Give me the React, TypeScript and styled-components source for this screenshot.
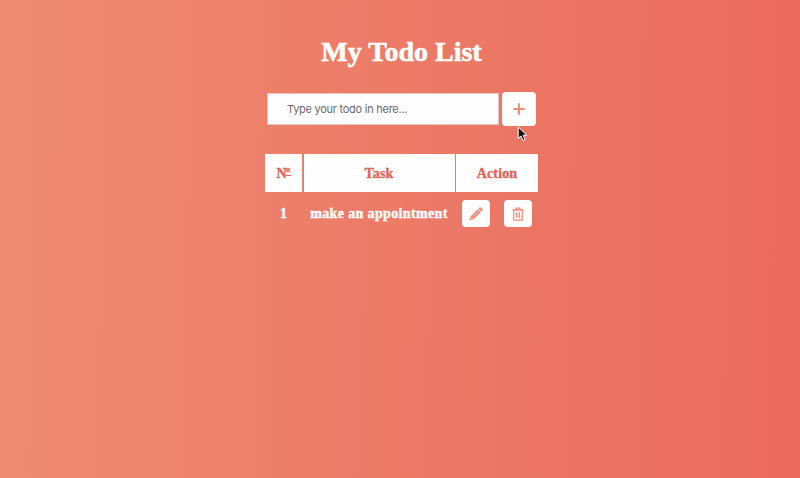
import React, { useState } from "react";
import styled, { createGlobalStyle } from "styled-components";

const GlobalStyle = createGlobalStyle`
  * { box-sizing: border-box; }
  body { margin: 0; }
`;

const Page = styled.main`
  display: flex;
  flex-direction: column;
  align-items: center;
  position: relative;
  height: 478px;
  overflow: hidden;
  padding: 34px 0 0 3px;
  background: linear-gradient(91deg, #ee8b72, #ea6a5d);
  color: #fff;
  font-family: "Liberation Serif", serif;
  font-weight: 700;
`;

const Title = styled.h1`
  margin: 0 0 21px;
  height: 36px;
  font-size: 28px;
  line-height: 36px;
  letter-spacing: 0;
  white-space: nowrap;
  -webkit-text-stroke: 0.6px #fff;
`;

const Form = styled.form`
  display: flex;
  align-items: center;
  gap: 3px;
  height: 35px;
  margin-bottom: 28px;
`;

const TodoInput = styled.input`
  width: 232px;
  height: 32px;
  padding: 1px 19px 0;
  border: 1px solid #e6c5c2;
  border-radius: 0;
  background: #fefdff;
  font: 400 11px Inter, sans-serif;
  letter-spacing: -0.26px;
  color: #666;
  outline: none;
  &::placeholder { color: #6b6a6b; opacity: 1; }
`;

const IconButton = styled.button<{ $large?: boolean }>`
  display: grid;
  place-items: center;
  width: ${(p) => (p.$large ? 34 : 28)}px;
  height: ${(p) => (p.$large ? 34 : 27)}px;
  padding: 0;
  border: 0;
  border-radius: 4px;
  background: #fffeff;
  color: #f18d75;
  svg { display: block; }
`;

const Table = styled.div`
  display: grid;
  grid-template-columns: 37px 151px 82px;
  column-gap: 1.5px;
  width: 273px;
`;

const Heading = styled.div`
  display: flex;
  align-items: center;
  justify-content: center;
  height: 38px;
  padding-top: 1px;
  background: #fffeff;
  color: #dc6558;
  font-size: 14px;
  letter-spacing: 0.15px;
  -webkit-text-stroke: 0.35px #dc6558;
`;

const Ordinal = styled.span`
  height: 9px;
  margin: -4px 0 0 -1px;
  border-bottom: 1px solid #dc6558;
  line-height: 14px;
`;

const Cell = styled.div<{ $spacing?: number }>`
  display: flex;
  align-items: center;
  justify-content: center;
  gap: 14px;
  height: 43px;
  font-size: 14px;
  letter-spacing: ${(p) => p.$spacing ?? 0}px;
  white-space: nowrap;
  -webkit-text-stroke: 0.4px #fff;
`;

const Pointer = styled.svg`
  position: absolute;
  left: 517px;
  top: 126px;
`;

const PlusIcon = () => (
  <svg width="12" height="12" viewBox="0 0 12 12" fill="none" stroke="currentColor" strokeWidth="1.9" strokeLinecap="round">
    <path d="M6 1v10M1 6h10" />
  </svg>
);

const PencilIcon = () => (
  <svg width="14" height="14" viewBox="0 0 14 14" fill="currentColor" stroke="currentColor" strokeWidth=".5">
    <path d="M8.7 2.6 11.4 5.3 4.5 12 .8 13.2 2 9.3z" />
    <path d="m9.6 1.7.9-.9a1 1 0 0 1 1.5 0l1.2 1.2a1 1 0 0 1 0 1.5l-.9.9z" />
    <path d="m4 9.2 4.8-4.8" stroke="#fff" strokeWidth=".6" />
    <path d="m2.2 10.5 1.3 1.3-1.1.3-.5-.5z" fill="#fff" stroke="none" opacity=".65" />
  </svg>
);

const TrashIcon = () => (
  <svg width="12" height="14" viewBox="0 0 12 14" fill="none" stroke="currentColor" strokeWidth="1.3">
    <path d="M.5 3h11M4 2.8V1.2h4v1.6M1.7 3.2v9.1c0 .6.3.9.9.9h6.8c.6 0 .9-.3.9-.9V3.2M4.7 5.3v5.6M7.3 5.3v5.6" />
  </svg>
);

const tasks = ["make an appointment"];

export default function App() {
  const [draft, setDraft] = useState("");
  return (
    <>
      <GlobalStyle />
      <Page>
        <Title>My Todo List</Title>
        <Form onSubmit={(e) => e.preventDefault()}>
          <TodoInput
            placeholder="Type your todo in here..."
            value={draft}
            onChange={(e) => setDraft(e.target.value)}
          />
          <IconButton $large aria-label="Add"><PlusIcon /></IconButton>
        </Form>
        <Table>
          <Heading>N<Ordinal>º</Ordinal></Heading>
          <Heading>Task</Heading>
          <Heading>Action</Heading>
          {tasks.map((task, i) => (
            <React.Fragment key={task}>
              <Cell>{i + 1}</Cell>
              <Cell $spacing={0.36}>{task}</Cell>
              <Cell>
                <IconButton aria-label="Edit"><PencilIcon /></IconButton>
                <IconButton aria-label="Delete"><TrashIcon /></IconButton>
              </Cell>
            </React.Fragment>
          ))}
        </Table>
        <Pointer width="12" height="16" viewBox="0 0 12 16">
          <path d="M1.2 1v11.5l2.7-2.5 2 4.5 2.2-1-2-4.3h3.8z" fill="#111" stroke="#fff" strokeWidth="1" />
        </Pointer>
      </Page>
    </>
  );
}
